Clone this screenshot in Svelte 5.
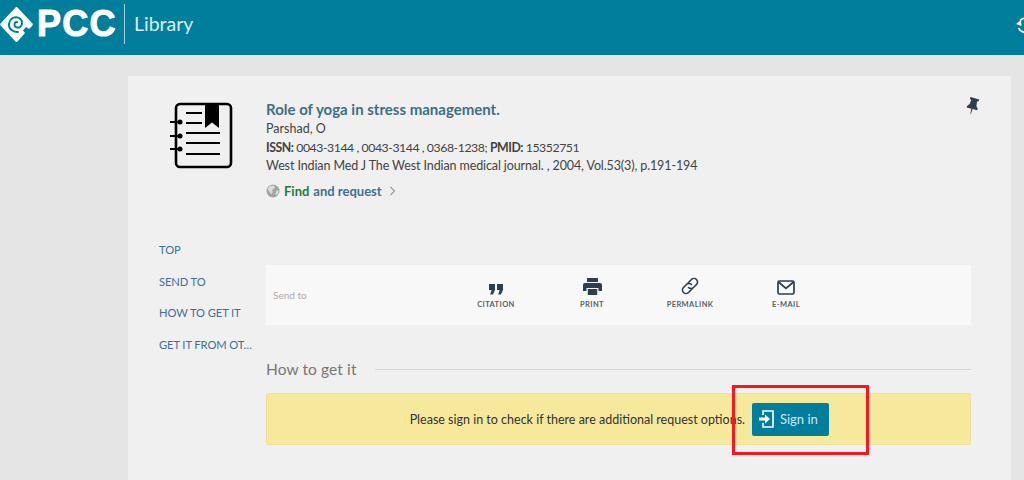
<script>
  const nav = ['TOP', 'SEND TO', 'HOW TO GET IT', 'GET IT FROM OT…'];
</script>

<div class="page">
  <header class="top">
    <svg class="mark" width="33" height="37" viewBox="0 0 33 37">
      <path d="M16 1 Q16.800 .6 17.500 1.500 L32.500 17.500 Q33 18.500 32.500 19.500 L29 23 L26 21 L23 24.500 L25 27 L17.500 35.500 Q16.500 36.500 15.500 35.500 L.5 19.500 Q0 18.500 .5 17.500 Z" fill="#fff" />
      <path d="M18 26 C12.500 26.500 8.500 22.500 9 17.800 C9.500 13.500 13 11 16.500 11.300 C20 11.600 22.500 14.500 22 17.800 C21.600 20.500 19.200 22 17 21.500 C15 21 14 19.200 14.600 17.500 C15 16.300 16.200 15.800 17.200 16.200" fill="none" stroke="#007e9c" stroke-width="2" stroke-linecap="round" />
    </svg>
    <span class="pcc">PCC</span>
    <span class="divider"></span>
    <span class="lib">Library</span>
    <svg class="refresh" width="16" height="20" viewBox="0 0 16 20">
      <path d="M4 4.500 A7 7 0 1 1 2.600 12" fill="none" stroke="#fff" stroke-width="1.800" />
      <path d="M0 8 L5 4 L5.500 10 Z" fill="#fff" />
    </svg>
  </header>

  <main class="card">
    <svg class="pin" width="15" height="18" viewBox="0 0 15 18">
      <g fill="#2c3e50" transform="rotate(15 7 8)">
        <path d="M2.500 1 H11.500 V3 L10 3.500 L10.500 8 L12.500 10.500 V12 H1.500 V10.500 L3.500 8 L4 3.500 L2.500 3 Z" />
        <path d="M6.300 12 H7.700 L7.200 17.500 H6.800 Z" />
      </g>
    </svg>

    <section class="record">
      <div class="thumb">
        <svg width="64" height="68" viewBox="0 0 64 68">
          <rect x="6" y="2" width="55" height="63" rx="4" fill="none" stroke="#000" stroke-width="2.600" />
          <path d="M35 1 H49 V26 L42 20.500 L35 26 Z" fill="#000" />
          <path d="M16 11 H32 M16 21 H32 M16 31 H50 M16 41 H50 M16 52 H50" stroke="#000" stroke-width="2" />
          <path d="M0 20 H10 M0 34 H10 M0 47 H10" stroke="#000" stroke-width="2.200" />
          <circle cx="10" cy="20" r="2.500" /><circle cx="10" cy="34" r="2.500" /><circle cx="10" cy="47" r="2.500" />
        </svg>
      </div>
      <div class="meta">
        <h1>Role of yoga in stress management.</h1>
        <p>Parshad, O</p>
        <p class="ids"><b>ISSN:</b> 0043-3144 , 0043-3144 , 0368-1238; <b>PMID:</b> 15352751</p>
        <p class="src">West Indian Med J The West Indian medical journal. , 2004, Vol.53(3), p.191-194</p>
        <div class="find">
          <svg width="14" height="14" viewBox="0 0 14 14">
            <circle cx="7" cy="7" r="6.500" fill="#a3a3a3" />
            <path d="M4 2 L8 1.500 L9 4 L6 6 L7 8 L5 10 L3 7 L1.500 5 Z M10 7 L12.500 6 L12 10 L9.500 11.500 Z" fill="#dcdcdc" />
          </svg>
          <span class="green">Find</span> <span class="blue">and request</span>
          <svg class="chev" width="7" height="10" viewBox="0 0 7 10"><path d="M1.500 1 L5.500 5 L1.500 9" fill="none" stroke="#8fa3b0" stroke-width="1.300" /></svg>
        </div>
      </div>
    </section>

    <section class="lower">
      <nav>
        {#each nav as item}
          <a href="#top">{item}</a>
        {/each}
      </nav>
      <div class="content">
        <div class="send">
          <span class="label">Send to</span>
          <div class="actions">
            <div class="act a1">
              <svg width="14" height="11" viewBox="0 0 14 11" fill="#2c3e50"><path d="M0 0 H6 V6 L3.800 10.500 H1.200 L2.600 6 H0 Z M8 0 H14 V6 L11.800 10.500 H9.200 L10.600 6 H8 Z" /></svg>
              <span>CITATION</span>
            </div>
            <div class="act a2">
              <svg width="19" height="17" viewBox="0 0 19 17" fill="#2c3e50">
                <path d="M4 0 H15 V4 H4 Z" />
                <path fill-rule="evenodd" d="M2 5 H17 A2 2 0 0 1 19 7 V13 H15.500 V10 H3.500 V13 H0 V7 A2 2 0 0 1 2 5 Z" />
                <path d="M4.800 11 H14.200 V17 H4.800 Z" />
              </svg>
              <span>PRINT</span>
            </div>
            <div class="act a3">
              <svg width="18" height="18" viewBox="0 0 18 18" fill="none" stroke="#2c3e50" stroke-width="1.600" stroke-linecap="round">
                <path d="M7 6 L10.500 2.500 A3.500 3.500 0 0 1 15.500 7.500 L12.500 10.500 A3.500 3.500 0 0 1 7.500 10.500" />
                <path d="M11 12 L7.500 15.500 A3.500 3.500 0 0 1 2.500 10.500 L5.500 7.500 A3.500 3.500 0 0 1 10.500 7.500" />
              </svg>
              <span>PERMALINK</span>
            </div>
            <div class="act a4">
              <svg width="18" height="15" viewBox="0 0 18 15" fill="none" stroke="#2c3e50" stroke-width="1.700">
                <rect x="1" y="1" width="16" height="13" rx="1.500" />
                <path d="M1.500 2 L9 8.500 L16.500 2" />
              </svg>
              <span>E-MAIL</span>
            </div>
          </div>
        </div>

        <div class="heading">
          <h2>How to get it</h2>
          <span class="rule"></span>
        </div>

        <div class="notice">
          <span>Please sign in to check if there are additional request options.</span>
          <button>
            <svg width="15" height="18" viewBox="0 0 15 18" fill="none" stroke="#fff" stroke-width="1.600">
              <path d="M4 5 V1 H14 V17 H4 V13" />
              <path d="M0 9 H7" stroke-width="3" />
              <path d="M6 4.500 L11 9 L6 13.500 Z" fill="#fff" stroke="none" />
            </svg>
            Sign in
          </button>
        </div>
      </div>
    </section>
  </main>

  <div class="callout"></div>
</div>

<style>
  :global(body) { margin: 0; background: #e5e5e5; }
  .page {
    position: relative;
    width: 1024px;
    height: 480px;
    overflow: hidden;
    background: #e5e5e5;
    font-family: "Lato", "Noto Sans", sans-serif;
    color: #3d3d3d;
  }
  .top {
    display: flex;
    align-items: center;
    height: 55px;
    background: #007e9c;
    color: #fff;
    position: relative;
  }
  .mark { flex: none; margin: 0 4px 7px 0; }
  .pcc {
    font: bold 36px/1 "Liberation Sans", sans-serif;
    -webkit-text-stroke: 1px #fff;
    letter-spacing: 1.200px;
    width: 83px;
    margin-bottom: 8px;
  }
  .divider { width: 1px; height: 40px; background: #9fd0dc; margin: 0 9px 7px 4px; }
  .lib { font: 19.500px/1 "Lato", sans-serif; color: #d6eef3; margin-bottom: 7px; }
  .refresh { position: absolute; left: 1016px; top: 16px; }

  .card {
    position: relative;
    box-sizing: border-box;
    width: 883px;
    height: 460px;
    margin: 21px 0 0 128px;
    padding: 23px 40px 0 31px;
    background: #f0f0f0;
  }
  .pin { position: absolute; left: 838px; top: 21px; }

  .record { display: flex; height: 142px; }
  .thumb { width: 107px; flex: none; padding: 0 0 0 11px; box-sizing: border-box; }
  .thumb svg { display: block; margin-top: 3px; }
  .meta h1 {
    margin: 0 0 1px;
    font-size: 15px;
    line-height: 20px;
    font-weight: 700;
    color: #3f6f80;
  }
  .meta p { margin: 0; font-size: 12.500px; line-height: 18.500px; color: #444; }
  .meta p b { font-weight: 700; }
  .meta .ids { font-size: 12.300px; letter-spacing: -0.45px; }
  .meta .src { letter-spacing: -0.11px; }
  .find {
    display: flex;
    align-items: center;
    gap: 4px;
    margin-top: 6px;
    font-size: 13px;
    line-height: 18px;
    font-weight: 700;
  }
  .green { color: #1f7a3a; }
  .blue { color: #3f6f8f; }
  .chev { margin-left: 3px; }

  .lower { display: flex; }
  nav { width: 107px; flex: none; display: flex; flex-direction: column; }
  nav a {
    display: block;
    height: 31.700px;
    line-height: 18px;
    font-size: 11.200px;
    letter-spacing: -0.1px;
    color: #3f6f98;
    text-decoration: none;
    white-space: nowrap;
  }
  .content { width: 705px; flex: none; }
  .send {
    position: relative;
    height: 60px;
    background: #f8f8f8;
    display: flex;
    align-items: center;
    margin-top: 24px;
  }
  .label { font-size: 10px; color: #aaa; margin-left: 7px; position: absolute; }
  .actions { display: flex; }
  .act {
    display: flex;
    flex-direction: column;
    align-items: center;
    justify-content: flex-end;
    height: 34px;
    font-size: 7.500px;
    font-weight: 700;
    letter-spacing: 0.4px;
    color: #555e68;
    margin-top: -4px;
  }
  .act span { line-height: 10px; margin-top: 4px; }
  .act svg { margin-bottom: 1px; }
  .a1 { width: 60px; margin-left: 200px; }
  .a2 { width: 60px; margin-left: 36px; }
  .a3 { width: 70px; margin-left: 33px; }
  .a4 { width: 60px; margin-left: 31px; }

  .heading { display: flex; align-items: center; height: 24px; margin-top: 32px; }
  h2 { margin: 0; font-size: 15.500px; font-weight: 400; color: #777; letter-spacing: 0.1px; }
  .rule { flex: 1; height: 1px; background: #d4d4d4; margin-left: 18px; }

  .notice {
    box-sizing: border-box;
    display: flex;
    align-items: center;
    justify-content: flex-end;
    gap: 7px;
    height: 52px;
    margin-top: 12px;
    padding-right: 141px;
    background: #f6e99c;
    border: 1px solid #ece09a;
    border-radius: 2px;
    font-size: 12.500px;
    color: #333;
  }
  button {
    display: flex;
    align-items: center;
    gap: 6px;
    width: 77px;
    height: 33px;
    box-sizing: border-box;
    padding: 0 0 0 7px;
    border: 0;
    border-radius: 2px;
    background: #007e9c;
    color: #cfe8ee;
    font: 13px "Lato", sans-serif;
  }

  .callout {
    position: absolute;
    left: 732px;
    top: 385px;
    width: 131px;
    height: 64px;
    border: 3px solid #f5191e;
    pointer-events: none;
  }
</style>
